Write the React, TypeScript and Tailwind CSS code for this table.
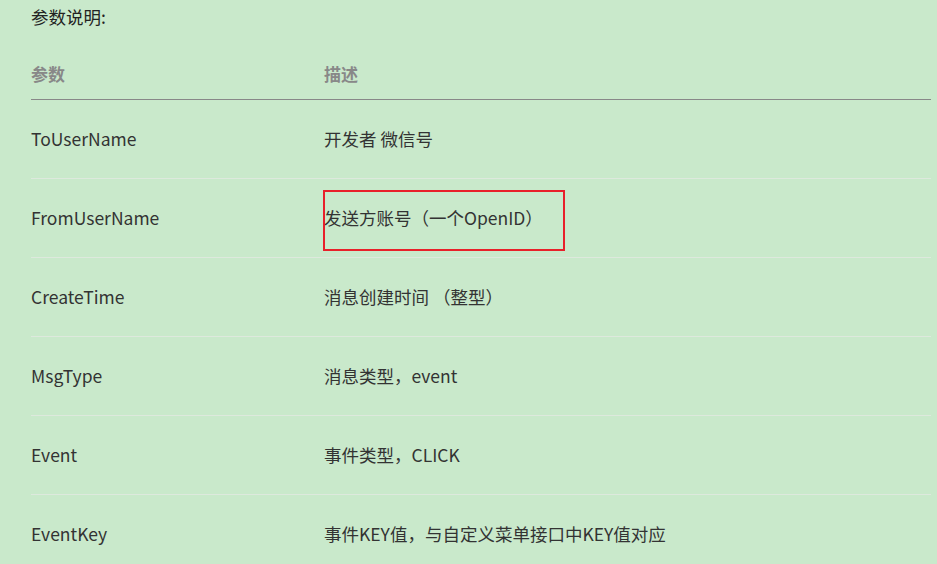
const rows = [
  { name: "ToUserName", desc: "开发者 微信号" },
  { name: "FromUserName", desc: "发送方账号（一个OpenID）", marked: true },
  { name: "CreateTime", desc: "消息创建时间 （整型）" },
  { name: "MsgType", desc: "消息类型，event" },
  { name: "Event", desc: "事件类型，CLICK" },
  { name: "EventKey", desc: "事件KEY值，与自定义菜单接口中KEY值对应" },
]

export default function App() {
  return (
    <div
      className="h-[564px] w-[937px] overflow-hidden bg-[#c9e9cb] pl-[31px] pr-[6px] text-[17.5px] text-[#333]"
      style={{ fontFamily: '"Noto Sans CJK SC", "Noto Sans", sans-serif' }}
    >
      <div className="pt-[6px] leading-[22px] text-[#222]">参数说明:</div>

      {/* header */}
      <div className="mt-[35px] flex border-b border-[#888] pb-[14px] text-[17px] font-bold leading-[22px] text-[#888]">
        <div className="w-[293px]">参数</div>
        <div>描述</div>
      </div>

      {rows.map((r) => (
        <div key={r.name} className="relative flex h-[79px] items-center border-b border-[#dde9dd] leading-[22px]">
          <div className="w-[293px]">{r.name}</div>
          <div>{r.desc}</div>
          {r.marked && (
            <div className="absolute left-[292px] top-[11px] h-[61px] w-[242px] border-2 border-[#e8202a]" />
          )}
        </div>
      ))}
    </div>
  )
}
